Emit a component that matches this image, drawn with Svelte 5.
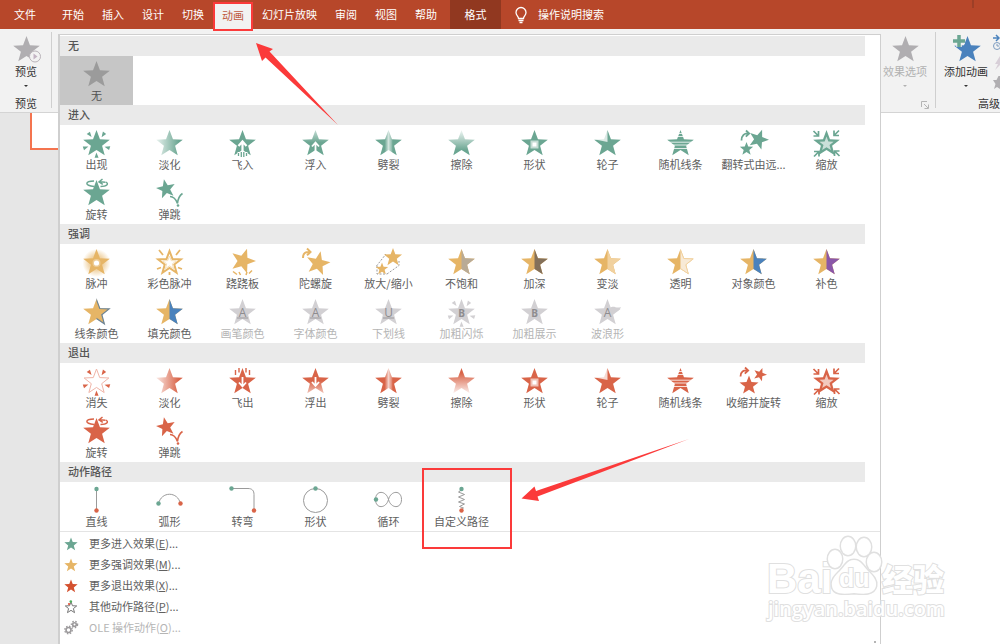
<script lang="ts">
	type Effect = { name: string; icon: string; alt?: string; disabled?: boolean; marked?: boolean };
	type Section = { title: string; tone: string; color: string; effects: Effect[] };

	const GREEN = "#6ba692";
	const GOLD = "#e6b566";
	const RED = "#d96448";
	const GREY = "#d2d0d3";
	const BLUE = "#4a82bd";

	const tabs = ["开始", "插入", "设计", "切换", "动画", "幻灯片放映", "审阅", "视图", "帮助"];

	const sections: Section[] = [
		{
			title: "无",
			tone: "none",
			color: "#9b9b9b",
			effects: [{ name: "无", icon: "plain" }]
		},
		{
			title: "进入",
			tone: "enter",
			color: GREEN,
			effects: [
				{ name: "出现", icon: "appear" },
				{ name: "淡化", icon: "fade" },
				{ name: "飞入", icon: "fly" },
				{ name: "浮入", icon: "float" },
				{ name: "劈裂", icon: "split" },
				{ name: "擦除", icon: "wipe" },
				{ name: "形状", icon: "shape" },
				{ name: "轮子", icon: "wheel" },
				{ name: "随机线条", icon: "bars" },
				{ name: "翻转式由远...", icon: "growturn" },
				{ name: "缩放", icon: "zoom" },
				{ name: "旋转", icon: "swivel" },
				{ name: "弹跳", icon: "bounce" }
			]
		},
		{
			title: "强调",
			tone: "emphasis",
			color: GOLD,
			effects: [
				{ name: "脉冲", icon: "pulse" },
				{ name: "彩色脉冲", icon: "colorpulse" },
				{ name: "跷跷板", icon: "teeter" },
				{ name: "陀螺旋", icon: "spin" },
				{ name: "放大/缩小", icon: "grow" },
				{ name: "不饱和", icon: "half", alt: "#b9ab96" },
				{ name: "加深", icon: "half", alt: "#83705a" },
				{ name: "变淡", icon: "half", alt: "#f1d19e" },
				{ name: "透明", icon: "half", alt: "#f8ead6" },
				{ name: "对象颜色", icon: "half", alt: BLUE },
				{ name: "补色", icon: "half", alt: "#8a57a8" },
				{ name: "线条颜色", icon: "line" },
				{ name: "填充颜色", icon: "half", alt: BLUE },
				{ name: "画笔颜色", icon: "letter", alt: "A_", disabled: true },
				{ name: "字体颜色", icon: "letter", alt: "A_", disabled: true },
				{ name: "下划线", icon: "letter", alt: "U_", disabled: true },
				{ name: "加粗闪烁", icon: "flash", alt: "B", disabled: true },
				{ name: "加粗展示", icon: "letter", alt: "B", disabled: true },
				{ name: "波浪形", icon: "wave", alt: "A", disabled: true }
			]
		},
		{
			title: "退出",
			tone: "exit",
			color: RED,
			effects: [
				{ name: "消失", icon: "disappear" },
				{ name: "淡化", icon: "fade" },
				{ name: "飞出", icon: "fly" },
				{ name: "浮出", icon: "float" },
				{ name: "劈裂", icon: "split" },
				{ name: "擦除", icon: "wipe" },
				{ name: "形状", icon: "shape" },
				{ name: "轮子", icon: "wheel" },
				{ name: "随机线条", icon: "bars" },
				{ name: "收缩并旋转", icon: "shrinkturn" },
				{ name: "缩放", icon: "zoom" },
				{ name: "旋转", icon: "swivel" },
				{ name: "弹跳", icon: "bounce" }
			]
		},
		{
			title: "动作路径",
			tone: "path",
			color: "#9a9a9a",
			effects: [
				{ name: "直线", icon: "p-line" },
				{ name: "弧形", icon: "p-arc" },
				{ name: "转弯", icon: "p-turn" },
				{ name: "形状", icon: "p-circle" },
				{ name: "循环", icon: "p-loop" },
				{ name: "自定义路径", icon: "p-custom", marked: true }
			]
		}
	];

	const more = [
		{ text: "更多进入效果", key: "E", color: GREEN },
		{ text: "更多强调效果", key: "M", color: GOLD },
		{ text: "更多退出效果", key: "X", color: "#d4512f" },
		{ text: "其他动作路径", key: "P", color: "outline" },
		{ text: "OLE 操作动作", key: "O", color: "gears" }
	];

	// Points of a five-pointed star
	function star(cx: number, cy: number, r: number, turn = 0) {
		const points = [];
		for (let i = 0; i < 10; i++) {
			const angle = ((i * 36 + turn - 90) * Math.PI) / 180;
			const radius = i % 2 ? r * 0.42 : r;
			points.push(
				(cx + radius * Math.cos(angle)).toFixed(2) + "," + (cy + radius * Math.sin(angle)).toFixed(2)
			);
		}
		return points.join(" ");
	}

	const base = star(15.5, 16, 14);
	const tones = [
		{ id: "enter", color: GREEN },
		{ id: "exit", color: RED }
	];
</script>

{#snippet rays(color: string, angles: number[])}
	{#each angles as a}
		<polygon points="13.4,2.2 17.4,2.2 15.6,7.5" fill={color} transform="rotate({a} 15.5 16)" />
	{/each}
{/snippet}

{#snippet dot(x: number, y: number, color: string)}
	<circle cx={x} cy={y} r="2.2" fill={color} />
{/snippet}

{#snippet icon(kind: string, color: string, tone: string, alt: string)}
	<svg class="icon" viewBox="0 0 31 30" aria-hidden="true">
		{#if kind === "plain"}
			<polygon points={base} fill={color} />
		{:else if kind === "appear"}
			<polygon points={base} fill={color} />
			{@render rays(color, [36, 108, 180, 252, 324])}
		{:else if kind === "disappear"}
			<polygon points={star(15.5, 16, 13)} fill="#fff" stroke="#f0b5a8" />
			{@render rays(color, [36, 108, 180, 252, 324])}
		{:else if kind === "fade"}
			<polygon points={base} fill="url(#{tone}-fade)" />
		{:else if kind === "fly"}
			<polygon points={base} fill={color} />
			{#if tone === "enter"}
				<path d="M15.5 23V14M11.5 18l4-4.5 4 4.5" fill="none" stroke="#fff" stroke-width="2.2" />
				<path d="M10.5 24h10v5h-10z" fill="#fff" />
				<path d="M11.5 25v3M14.3 24v5M16.8 24v5M19.5 25v3" stroke={color} stroke-width="1.3" />
			{:else}
				<path d="M7 1h4.500v7H7zM19.500 1H24v7h-4.500z" fill="#fff" />
				<path d="M8.5 4v5M12 2v4.5M19 2v4.5M22.5 4v5" stroke={color} stroke-width="1.4" />
				<path d="M15.5 11v9M12 16.5l3.500 4 3.500-4" fill="none" stroke="#fff" stroke-width="1.800" />
			{/if}
		{:else if kind === "float"}
			<polygon points={base} fill="url(#{tone}-float)" />
			{#if tone === "enter"}
				<path d="M15.5 23.500v-8M12 18.5l3.500-4 3.500 4" fill="none" stroke="#fff" stroke-width="1.800" />
			{:else}
				<path d="M15.5 11v8M12 16l3.500 4 3.500-4" fill="none" stroke="#fff" stroke-width="1.800" />
			{/if}
		{:else if kind === "split"}
			<polygon points={base} fill="url(#{tone}-split)" />
		{:else if kind === "wipe"}
			<polygon points={base} fill="url(#{tone}-wipe)" />
		{:else if kind === "shape"}
			<polygon points={base} fill={color} />
			<rect x="11.5" y="12.5" width="8" height="8" fill="#fff" opacity=".6" />
			<rect x="13.5" y="14.5" width="4" height="4" fill="#fff" />
		{:else if kind === "wheel"}
			<polygon points={base} fill={color} />
			<path d="M15.5 1v13L2 11.2l9-.5z" fill="#fff" opacity=".75" />
		{:else if kind === "bars"}
			<polygon points={base} fill={color} />
			<path d="M9 5.5h13M9 8.5h13M2 14.2h27M2 17h27M5 20.5h21" stroke="#fff" stroke-width=".8" />
		{:else if kind === "growturn"}
			<polygon points={star(20.5, 11.5, 10.5, 20)} fill={color} />
			<polygon points={star(8.5, 21, 7)} fill={color} />
			<path d="M3.5 12.5c0-5 3-7.5 7-7M8 2.5l3.2 3-3.4 3.2" fill="none" stroke={color} stroke-width="1.8" />
		{:else if kind === "shrinkturn"}
			<polygon points={star(22, 8.5, 7, 20)} fill={color} />
			<polygon points={star(11, 19.5, 10)} fill={color} />
			<path d="M2.5 10.5c0-5 3-6.5 7-6M7 1.5l3.2 3L6.8 7.7" fill="none" stroke={color} stroke-width="1.8" />
		{:else if kind === "zoom"}
			<polygon points={base} fill={color} />
			<polygon points={star(15.5, 16, 7.5)} fill="#fff" opacity=".65" />
			{#each [0, 90, 180, 270] as a}
				<path
					d="M2.500 3l4.500 4.500M7.500 3v5H2.500"
					fill="none"
					stroke={color}
					stroke-width="1.7"
					transform="rotate({a} 15.5 15.5)"
				/>
			{/each}
		{:else if kind === "swivel"}
			<polygon points={base} fill={color} />
			<path
				d="M13 8.5C3 7.500 4 3 13 3M25 4c3 2 1 4.500-5.500 4.500M24.500 4.200l-6-.4M21.500 1l-3.500 2.900 3.800 2.500"
				fill="none"
				stroke={color}
				stroke-width="1.5"
			/>
		{:else if kind === "bounce"}
			<polygon points={star(12, 11, 10, -12)} fill={color} />
			<path d="M16 18.500c4 0 6 3 7.500 7 .5-5 2-8 5-10" fill="none" stroke={color} stroke-width="1.6" />
			<circle cx="24" cy="27.5" r="1.300" fill={color} />
		{:else if kind === "pulse"}
			<circle cx="15.5" cy="16" r="14" fill="url(#glow)" />
			<polygon points={base} fill={color} />
			<circle cx="15.5" cy="16" r="4" fill="#fff" opacity=".3" />
			<circle cx="15.5" cy="16" r="2.600" fill="#fff" />
		{:else if kind === "colorpulse"}
			<polygon points={star(15.5, 16, 12)} fill="#fff" stroke={color} stroke-width="2" />
			<polygon points={star(15.5, 16, 7)} fill="#fff" stroke="#f5dfba" />
			<path d="M5 3l4 5M26 3l-4 5M3 22l4-1.500M28 22l-4-1.500M15.500 25v3" stroke={color} stroke-width="1.800" />
		{:else if kind === "teeter"}
			<polygon points={star(16, 14, 13, 18)} fill={color} />
			<path d="M6 24.500l4 3M12 25l1.500 3M20 25l-1 3M25 23.500l-3 3" stroke={color} stroke-width="1.500" />
		{:else if kind === "spin"}
			<polygon points={star(18, 16.5, 12.5, 12)} fill={color} />
			<path d="M3 11c0-5 2.500-6.500 7-6M7 1.500l3.500 3.400L7 8.400" fill="none" stroke={color} stroke-width="2" />
		{:else if kind === "grow"}
			<path d="M3.500 19L13 7M14 27l12-8.500V14M4 19v8h10" fill="none" stroke="#999" stroke-dasharray="2 1.500" />
			<polygon points={star(20, 10.5, 9.5)} fill={color} />
			<polygon points={star(9, 22, 6.5)} fill={color} />
		{:else if kind === "half"}
			<polygon points={base} fill={color} />
			<polygon points={base} fill={alt} clip-path="url(#right-half)" />
			{#if alt === "#f8ead6"}
				<polygon points={star(15.5, 16, 13.2)} fill="none" stroke="#f1d19e" clip-path="url(#right-half)" />
			{/if}
		{:else if kind === "line"}
			<polygon points={base} fill={color} />
			<polygon points={star(15.5, 16, 13.3)} fill="none" stroke="#6d8598" stroke-width="1.200" clip-path="url(#right-half)" />
		{:else if kind === "letter" || kind === "flash" || kind === "wave"}
			<polygon points={base} fill={color} />
			{#if kind === "flash"}
				{@render rays(color, [36, 108, 180, 252, 324])}
			{/if}
			{#if kind === "wave"}
				<path d="M18 11c4-3 6 1 11-1-2 4-4 5-8 5z" fill={color} />
			{/if}
			<text x="15.5" y="19.500" text-anchor="middle" class:heavy={alt === "B"}>{alt[0]}</text>
			{#if alt.length > 1}
				<path d="M10 21h11" stroke="#9a989b" />
			{/if}
		{:else if kind === "p-line"}
			<path d="M15.5 4v22" stroke={color} />
			{@render dot(15.5, 4, GREEN)}
			{@render dot(15.5, 25.5, RED)}
		{:else if kind === "p-arc"}
			<path d="M4.500 19C7 6 24 6 26.500 19" fill="none" stroke={color} />
			{@render dot(4.500, 18.500, GREEN)}
			{@render dot(26.500, 18.500, RED)}
		{:else if kind === "p-turn"}
			<path d="M5 3.500h16c4 0 6 2 6 6V25" fill="none" stroke={color} />
			{@render dot(4.500, 3.500, GREEN)}
			{@render dot(27, 25.500, RED)}
		{:else if kind === "p-circle"}
			<circle cx="15.5" cy="15.5" r="12" fill="none" stroke={color} />
			{@render dot(15.5, 3.500, GREEN)}
		{:else if kind === "p-loop"}
			<path
				d="M15.500 14.500C13 5 2.500 5 2.500 14.500s10.500 9.500 13 0 13-9.500 13 0-10.500 9.500-13 0z"
				fill="none"
				stroke={color}
			/>
			{@render dot(3, 14.500, GREEN)}
		{:else if kind === "p-custom"}
			<path d="M15.500 5l-3 2 6 2.500-6 2.500 6 2.500-6 2.500 6 2-5 2.500 4 1.500-2.500 2" fill="none" stroke={color} />
			{@render dot(15.5, 4, GREEN)}
			{@render dot(15.5, 25.5, RED)}
		{/if}
	</svg>
{/snippet}

{#snippet gear(x: number, y: number, r: number)}
	<circle cx={x} cy={y} {r} fill="none" stroke="#9c9a9c" stroke-width="1.600" />
	<circle cx={x} cy={y} r={r + 1.3} fill="none" stroke="#9c9a9c" stroke-width="1.300" stroke-dasharray="1.500 1.500" />
{/snippet}

<svg class="defs" aria-hidden="true">
	<defs>
		<clipPath id="right-half"><rect x="15.5" y="0" width="16" height="30" /></clipPath>
		<radialGradient id="glow">
			<stop offset=".5" stop-color={GOLD} stop-opacity=".6" />
			<stop offset="1" stop-color={GOLD} stop-opacity="0" />
		</radialGradient>
		{#each tones as t}
			<linearGradient id="{t.id}-fade">
				<stop offset="0" stop-color={t.color} stop-opacity=".15" />
				<stop offset=".85" stop-color={t.color} />
			</linearGradient>
			<linearGradient id="{t.id}-split">
				<stop offset="0" stop-color={t.color} />
				<stop offset=".36" stop-color={t.color} />
				<stop offset=".5" stop-color={t.color} stop-opacity=".3" />
				<stop offset=".62" stop-color={t.color} stop-opacity=".75" />
				<stop offset=".66" stop-color={t.color} />
			</linearGradient>
			<linearGradient id="{t.id}-wipe" x1="0" x2="0" y1={t.id === "enter" ? 0 : 1} y2={t.id === "enter" ? 1 : 0}>
				<stop offset="0" stop-color={t.color} stop-opacity=".1" />
				<stop offset=".8" stop-color={t.color} />
			</linearGradient>
			<linearGradient id="{t.id}-float" x1="0" x2="0" y1={t.id === "enter" ? 0 : 1} y2={t.id === "enter" ? 1 : 0}>
				<stop offset="0" stop-color={t.color} stop-opacity=".4" />
				<stop offset=".5" stop-color={t.color} />
			</linearGradient>
		{/each}
	</defs>
</svg>

<div class="window">
	<nav class="tabs">
		<button class="tab file">文件</button>
		{#each tabs as tab}
			<button class="tab" class:active={tab === "动画"}>{tab}</button>
		{/each}
		<button class="tab format">格式</button>
		<button class="tell">
			<svg width="16" height="18" viewBox="0 0 16 18" fill="none" stroke="#fff" stroke-width="1.300">
				<path d="M5.500 12.500C5.500 10 3 9.500 3 6.500a5 5 0 0 1 10 0c0 3-2.500 3.500-2.500 6zM5.500 14.500h5M6.500 16.500h3" />
			</svg>
			操作说明搜索
		</button>
		<span class="mark"></span>
	</nav>

	<div class="ribbon">
		<div class="group preview">
			<button class="command">
				<svg class="icon" viewBox="0 0 31 30">
					<polygon points={base} fill="#b0aeb1" />
					<circle cx="24" cy="22.500" r="5.500" fill="#f2f2f2" stroke="#b9b3b9" />
					<polygon points="22.500,19.500 22.500,25.500 26.500,22.500" fill="#c3b4c3" />
				</svg>
				预览
				<i class="caret"></i>
			</button>
			<span class="group-name">预览</span>
		</div>
		<div class="group options">
			<button class="command" disabled>
				<svg class="icon" viewBox="0 0 31 30"><polygon points={base} fill="#b0aeb1" /></svg>
				效果选项
				<i class="caret"></i>
			</button>
			<svg class="launcher" width="8" height="8" viewBox="0 0 8 8" fill="none" stroke="#b5b5b5">
				<path d="M.5 6V.5H6M3 3l4 4M7.500 3.500v4h-4" />
			</svg>
		</div>
		<div class="group advanced">
			<div class="row">
				<button class="command">
					<svg class="icon" viewBox="0 0 31 30">
						<polygon points={star(16.5, 16, 14)} fill={BLUE} />
						<path d="M8 1v12M2 7h12" stroke="#f2f2f2" stroke-width="5.500" />
						<path d="M8 1v12M2 7h12" stroke="#6ba692" stroke-width="3.500" />
					</svg>
					添加动画
					<i class="caret"></i>
				</button>
				<svg class="side" width="7" height="56" viewBox="0 0 7 56" fill="none">
					<path d="M0 4h6M3 1l3 3-3 3" stroke={BLUE} stroke-width="1.500" />
					<circle cx="4" cy="12" r="3.500" stroke="#7d9cc0" />
					<path d="M4 10v2h2" stroke="#7d9cc0" />
					<path d="M7 22l-5 8h3l-3 6 5-5z" fill="#d8cfd8" />
					<path d="M0 46h3.500l2-4H7v13l-3-2-3 2 1.500-5z" fill="#b0aeb1" />
				</svg>
			</div>
			<span class="group-name">高级</span>
		</div>
	</div>

	<div class="workspace">
		<aside><div class="slide"></div></aside>
	</div>

	<div class="gallery">
		{#each sections as section}
			<h2>{section.title}</h2>
			<div class="effects">
				{#each section.effects as effect}
					<button
						class="effect"
						class:selected={section.tone === "none"}
						class:marked={effect.marked}
						disabled={effect.disabled}
					>
						{@render icon(effect.icon, effect.disabled ? GREY : section.color, section.tone, effect.alt ?? "")}
						<span>{effect.name}</span>
					</button>
				{/each}
			</div>
		{/each}
		<div class="more">
			{#each more as item}
				<button disabled={item.color === "gears"}>
					<svg width="16" height="16" viewBox="0 0 16 16">
						{#if item.color === "gears"}
							{@render gear(5.500, 10, 2.500)}
							{@render gear(11.500, 4.500, 1.800)}
						{:else if item.color === "outline"}
							<polygon points={star(8, 8.800, 6)} fill="#fff" stroke="#777" />
							<circle cx="6" cy="5" r="1.100" fill="#e0523a" />
							<circle cx="7.800" cy="2.500" r="1.300" fill="#4fae5a" />
						{:else}
							<polygon points={star(8, 8.500, 7)} fill={item.color} />
						{/if}
					</svg>
					<span>{item.text}(<u>{item.key}</u>)...</span>
				</button>
			{/each}
		</div>
		<i class="grip"></i>
	</div>

	<svg class="arrows" width="1000" height="644" aria-hidden="true">
		<polygon points="256,43 273,49 269.500,51.500 338,125 265.500,57.500 262,61" />
		<polygon points="521.500,498.500 534.500,486.500 536,491 689,439 537.500,496.500 539,501" />
	</svg>

	<svg class="watermark" width="184" height="90" viewBox="0 0 184 90">
		<text x="3" y="59" class="brand">Bai</text>
		<ellipse cx="71" cy="25" rx="7" ry="9" />
		<ellipse cx="84" cy="12" rx="7" ry="9" />
		<ellipse cx="100" cy="13" rx="7" ry="9" />
		<ellipse cx="110" cy="28" rx="7" ry="9" />
		<path d="M90 26c7 0 9 6 14 11s9 9 8 15c-2 9-12 8-22 7-10 1-21 2-22-7-1-6 3-10 8-15s7-11 14-11z" />
		<text x="75" y="53" class="du">du</text>
		<text x="118" y="57" class="cjk">经验</text>
		<text x="4" y="82" class="site">jingyan.baidu.com</text>
	</svg>
</div>

<style>
	:global(body) {
		background: #fff;
	}

	.window {
		position: relative;
		min-height: 100vh;
		display: flex;
		flex-direction: column;
		overflow: hidden;
		font: 11px/13px "Noto Sans CJK SC", sans-serif;
		color: #444;
	}

	button {
		font: inherit;
		color: inherit;
		background: none;
		border: none;
		padding: 0;
		margin: 0;
		white-space: nowrap;
	}

	.defs {
		position: absolute;
		width: 0;
		height: 0;
	}

	.icon {
		display: block;
		width: 31px;
		height: 30px;
	}

	.icon text {
		font: 12px "Open Sans", sans-serif;
		fill: #8e8c8f;
	}

	.icon text.heavy {
		font-weight: 700;
		font-size: 10px;
	}

	.tabs {
		display: flex;
		height: 29px;
		background: #b7472a;
		color: #fff;
	}

	.tab {
		padding: 0 9px;
	}

	.file {
		width: 53px;
		padding: 0 3px 0 0;
	}

	.active {
		position: relative;
		z-index: 3;
		box-sizing: border-box;
		height: 29px;
		margin-top: 2px;
		padding: 0 7px 3px;
		background: #f2f2f2;
		border: 2px solid #fb3a3a;
		color: #bf593e;
	}

	.format {
		width: 51px;
		margin-left: 4px;
		background: #913820;
	}

	.tell {
		display: flex;
		align-items: center;
		gap: 9px;
		margin-left: 12px;
	}

	.mark {
		width: 2px;
		height: 8px;
		margin: 0 26px 0 auto;
		background: #9d3f27;
	}

	.ribbon {
		display: flex;
		justify-content: space-between;
		height: 83px;
		background: #f2f2f2;
		border-bottom: 1px solid #d4d4d4;
	}

	.group {
		position: relative;
		display: flex;
		flex-direction: column;
		align-items: center;
		box-sizing: border-box;
		padding-top: 5px;
		color: #333;
	}

	.preview {
		width: 52px;
	}

	.options {
		width: 54px;
		margin-left: auto;
		padding-right: 6px;
	}

	.advanced {
		width: 65px;
		align-items: flex-start;
		padding-left: 9px;
	}

	.preview::after,
	.advanced::before {
		content: "";
		position: absolute;
		top: 3px;
		bottom: 4px;
		right: 0;
		width: 1px;
		background: #cfcfcf;
	}

	.advanced::before {
		left: 0;
	}

	.row {
		display: flex;
		gap: 5px;
	}

	.side {
		flex: none;
	}

	.command {
		display: flex;
		flex-direction: column;
		align-items: center;
		line-height: 15px;
	}

	.command:disabled {
		color: #b1b1b1;
	}

	.caret {
		margin-top: 6px;
		border: 2px solid transparent;
		border-top-color: currentColor;
		border-bottom: none;
	}

	.group-name {
		margin-top: auto;
		margin-bottom: 2px;
	}

	.advanced .group-name {
		padding-left: 34px;
		white-space: nowrap;
	}

	.launcher {
		align-self: flex-end;
		margin-top: auto;
		margin-bottom: 3px;
	}

	.workspace {
		flex: 1;
		display: flex;
	}

	aside {
		width: 59px;
		background: #e6e6e6;
	}

	.slide {
		height: 35px;
		margin-left: 30px;
		background: #fff;
		border: solid #f4744f;
		border-width: 0 0 2px 2px;
	}

	.gallery {
		position: absolute;
		top: 34px;
		bottom: 0;
		left: 58px;
		right: 119px;
		box-sizing: border-box;
		padding: 1px 15px 0 0;
		background: #fff;
		border: solid #cfcfcf;
		border-width: 1px 1px 0 2px;
	}

	h2 {
		margin: 0;
		padding: 0 0 2px 8px;
		font-size: 11px;
		font-weight: 500;
		line-height: 18px;
		color: #555;
		background: #eaeaea;
	}

	.effects {
		display: grid;
		grid-template-columns: repeat(auto-fill, 73px);
		grid-auto-rows: 49px;
		row-gap: 1px;
	}

	.effect {
		position: relative;
		display: flex;
		flex-direction: column;
		align-items: center;
		padding-top: 3px;
		line-height: 12px;
		color: #606060;
	}

	.effect:disabled,
	.more button:disabled {
		color: #b5b5b5;
	}

	.selected {
		background: #c6c6c6;
		color: #505050;
	}

	.marked::after {
		content: "";
		position: absolute;
		inset: -14px -14px -18px -3px;
		border: 2px solid #fb3a3a;
	}

	.more {
		display: flex;
		flex-direction: column;
		margin-right: -15px;
		padding-top: 1px;
		border-top: 1px solid #e4e4e4;
		color: #606060;
	}

	.more button {
		display: flex;
		align-items: center;
		gap: 10px;
		height: 21px;
		padding-left: 3px;
	}

	.grip {
		position: absolute;
		right: 4px;
		bottom: 1px;
		width: 2px;
		height: 2px;
		background: #b5b5b5;
	}

	.arrows {
		position: absolute;
		top: 0;
		left: 0;
		fill: #fb3a3a;
		pointer-events: none;
	}

	.watermark {
		position: absolute;
		right: 52px;
		bottom: 20px;
		fill: #fff;
		stroke: #e0e0e0;
		stroke-width: 2;
		paint-order: stroke;
		pointer-events: none;
	}

	.watermark ellipse,
	.watermark path {
		stroke-width: 3;
	}

	.brand {
		font: bold 42px "Liberation Sans", sans-serif;
	}

	.du {
		font: bold 25px "Liberation Sans", sans-serif;
	}

	.cjk {
		font: 900 31px "Noto Sans CJK SC", sans-serif;
	}

	.site {
		font: 600 20px "Open Sans", sans-serif;
	}
</style>
